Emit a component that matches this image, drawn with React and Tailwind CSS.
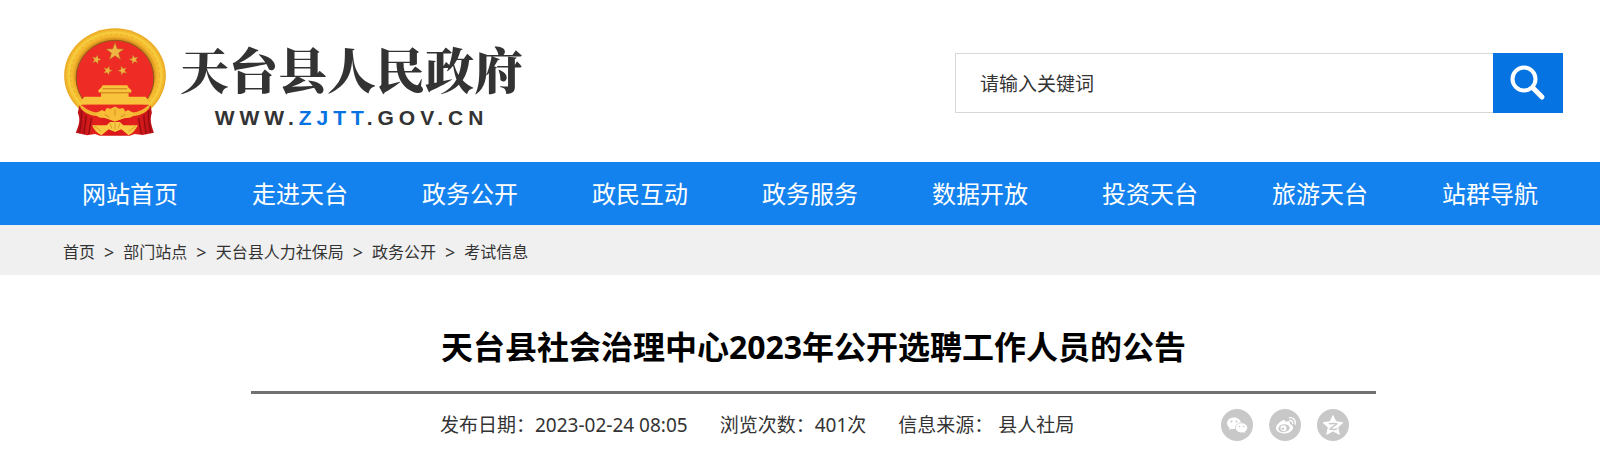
const NAV = ["网站首页", "走进天台", "政务公开", "政民互动", "政务服务", "数据开放", "投资天台", "旅游天台", "站群导航"];
const CRUMBS = ["首页", "部门站点", "天台县人力社保局", "政务公开", "考试信息"];

function Emblem() {
  return (
    <svg viewBox="42 25 306 325" className="h-[108px] w-[102px] shrink-0" role="img" aria-label="国徽">
      <defs>
        <radialGradient id="rim" cx="0.5" cy="0.5" r="0.5">
          <stop offset="0.75" stopColor="#c8861a" />
          <stop offset="0.82" stopColor="#f3b22a" />
          <stop offset="0.91" stopColor="#f8ce3e" />
          <stop offset="1" stopColor="#eaa41f" />
        </radialGradient>
        <linearGradient id="drape" x1="0" x2="1" y1="0" y2="0">
          <stop offset="0" stopColor="#b80f16" />
          <stop offset="0.25" stopColor="#e3201e" />
          <stop offset="0.5" stopColor="#d8181a" />
          <stop offset="0.75" stopColor="#e3201e" />
          <stop offset="1" stopColor="#b80f16" />
        </linearGradient>
        <path id="star" d="M0-10 2.4-3.2 9.5-3.1 3.8 1.2 5.9 8.1 0 4-5.9 8.1-3.8 1.2-9.5-3.1-2.4-3.2Z" />
      </defs>
      <ellipse cx="195" cy="168" rx="153" ry="142" fill="url(#rim)" />
      <ellipse cx="195" cy="168" rx="134" ry="124" fill="none" stroke="#e4a025" strokeWidth="2" strokeDasharray="7 9" />
      <ellipse cx="195" cy="176" rx="117" ry="114" fill="#ee2b24" stroke="#8f5a1c" strokeWidth="3" />
      <g fill="#efb643" stroke="#b9541c" strokeWidth="0.6">
        <use href="#star" transform="translate(195 97) scale(2.9)" />
        <use href="#star" transform="translate(139 120) rotate(15) scale(1.5)" />
        <use href="#star" transform="translate(252 120) rotate(-15) scale(1.5)" />
        <use href="#star" transform="translate(173 153) rotate(20) scale(1.5)" />
        <use href="#star" transform="translate(218 153) rotate(-20) scale(1.5)" />
      </g>
      <path d="M158 197h74l4 8 9 8-2 7h-7v12h51l8 10v14H95v-14l8-10h50v-12h-6l-3-7 9-8Z" fill="#f9c43b" />
      <path d="M148 220h94M158 208h74" stroke="#c67a1d" strokeWidth="3" fill="none" />
      <path d="M92 256h206l-14 16q-12 8-26 10l-18-8-20-8-25-4-25 4-20 8-18 8q-14-2-26-10Z" fill="#ea2822" />
      <path d="M88 258c18 22 46 32 70 34l37 14 37-14c24-2 52-12 70-34l4 22c-8 24 0 40 6 60l-34 7-24-3-14 5H149l-14-5-24 4-34-8c8-20 16-38 6-60Z" fill="url(#drape)" />
      <path d="M94 274c2 24-2 44-6 66M108 288c0 20-6 40-6 55M296 274c-2 24 2 44 6 66M282 288c0 20 6 40 6 55M124 296l-8 48M266 296l8 48" stroke="#940c13" strokeWidth="4" fill="none" />
      <path d="M96 258q18 18 46 22l-6 10q-30-4-46-26ZM294 258q-18 18-46 22l6 10q30-4 46-26Z" fill="#f3b22f" />
      <path d="M136 286c10 12 24 8 36 12l23 8 23-8c12-4 26 0 36-12l-8-8-12-6-8 4-6-10-12 2-13-7-13 7-12-2-6 10-8-4-12 6Z" fill="#f7bd37" />
      <path d="M164 285l14 8M226 285l-14 8M195 270v18" stroke="#d88d21" strokeWidth="3" />
      <path d="M170 318l10-10h30l10 10 44 0c-8 16-18 26-28 30l-22-18-19 8-19-8-22 18c-12-6-22-16-28-30Z" fill="#f9ca43" />
      <path d="M180 312l6 16M195 309v22M210 312l-6 16M132 320l22 16M258 320l-22 16" stroke="#cf8620" strokeWidth="2" />
    </svg>
  );
}

function WechatIcon() {
  return (
    <svg viewBox="0 0 32 32" className="size-8" aria-hidden="true">
      <path fill="#fff" d="M13 8.500c-4 0-7 2.500-7 5.800 0 1.900 1 3.500 2.600 4.500l-.6 2.200 2.500-1.300c.8.2 1.600.3 2.500.3 4 0 7-2.500 7-5.700s-3-5.800-7-5.800Z" />
      <path fill="#fff" stroke="#c8c8c8" strokeWidth=".7" d="M20.500 13.800c-3.300 0-6 2.200-6 5s2.700 5 6 5c.7 0 1.400-.1 2-.3l2.200 1.100-.5-1.900c1.400-.9 2.300-2.300 2.300-3.900 0-2.800-2.700-5-6-5Z" />
      <g fill="#c8c8c8"><circle cx="10.500" cy="12.500" r="1" /><circle cx="15.500" cy="12.500" r="1" /><circle cx="18.500" cy="17.500" r=".8" /><circle cx="22.500" cy="17.500" r=".8" /></g>
    </svg>
  );
}

function WeiboIcon() {
  return (
    <svg viewBox="0 0 32 32" className="size-8" aria-hidden="true">
      <path fill="#fff" d="M13.500 11.500c1.500-.8 3-.5 2.700 1.500 2.500-1 5-1 4.800 1.200-.1.700-.2 1 .8 1.400 1.500.6 2.200 1.500 2.200 2.900 0 3.200-4 6-8.500 6S7 22.200 7 19c0-2.700 3.500-6.300 6.500-7.500Z" />
      <ellipse cx="15" cy="19.200" rx="5.700" ry="3.900" fill="#c8c8c8" transform="rotate(-8 15 19.200)" />
      <circle cx="14.500" cy="19.300" r="3" fill="#fff" />
      <circle cx="13.800" cy="19.800" r="1.200" fill="#c8c8c8" />
      <path fill="none" stroke="#fff" strokeWidth="1.400" strokeLinecap="round" d="M20.500 8.700c3.700-.5 6.500 2.500 5.800 6.300M20.700 11.500c1.900-.3 3.300 1.200 2.900 3" />
    </svg>
  );
}

function QzoneIcon() {
  return (
    <svg viewBox="0 0 32 32" className="size-8" aria-hidden="true">
      <path fill="#fff" stroke="#fff" strokeWidth="1" strokeLinejoin="round" d="M16 6.500l2.900 6.300 7.100.8-5.300 4.700 1.600 7L16 21.900l-6.300 3.400 1.600-7L6 13.600l7.100-.8Z" />
      <path fill="none" stroke="#c8c8c8" strokeWidth="1.500" strokeLinejoin="round" d="M11.800 14.800c2.800-.5 5.500-.5 8 0l-7 5.200c2.600.5 5 .5 7.400.1" />
    </svg>
  );
}

const SHARE = [
  ["分享到微信", WechatIcon],
  ["分享到微博", WeiboIcon],
  ["分享到QQ空间", QzoneIcon],
];

export default function App() {
  return (
    <div className="bg-white font-['Noto_Sans','Noto_Sans_CJK_SC',sans-serif] text-[#333]">
      <header className="flex items-start justify-between pt-7 pr-[37px] pb-[26px] pl-16">
        <a href="#" className="flex items-start gap-[14px]">
          <Emblem />
          <span className="flex flex-col items-center pt-[14px]">
            <span className="font-['Noto_Serif_CJK_SC','Noto_Sans_CJK_SC',serif] text-[49px] leading-[52px] font-black whitespace-nowrap">天台县人民政府</span>
            <span className="pt-3 font-['Liberation_Sans',sans-serif] text-[21px] leading-6 font-bold tracking-[5px]">
              WWW.<span className="text-[#0573e1]">ZJTT</span>.GOV.CN
            </span>
          </span>
        </a>
        <form className="mt-[25px] flex h-[60px] w-[608px]" onSubmit={(e) => e.preventDefault()}>
          <input
            type="text"
            aria-label="搜索关键词"
            placeholder="请输入关键词"
            className="min-w-0 flex-1 border border-r-0 border-[#d8d8d8] px-6 pt-[2px] text-[19px] outline-none placeholder:text-[#333] placeholder:opacity-100"
          />
          <button type="submit" aria-label="搜索" className="flex w-[70px] items-center justify-center bg-[#0573e1]">
            <svg viewBox="0 0 36 36" className="size-9" fill="none" stroke="#fff" aria-hidden="true">
              <circle cx="14" cy="14" r="11.500" strokeWidth="4" />
              <path d="M23 23l9 9" strokeWidth="5" strokeLinecap="round" />
            </svg>
          </button>
        </form>
      </header>

      <nav className="flex h-[63px] bg-[#1382ee] pr-[25px] pl-[45px]">
        {NAV.map((item) => (
          <a key={item} href="#" className="flex flex-1 items-center justify-center text-2xl whitespace-nowrap text-white">{item}</a>
        ))}
      </nav>

      <nav aria-label="面包屑" className="flex h-[50px] items-center gap-[9px] bg-[#f0f0f0] px-[63px] pt-1 text-base">
        {CRUMBS.map((item, i) => (
          <span key={item} className="flex items-center gap-[9px]">
            {i > 0 && <span className="text-lg leading-6">&gt;</span>}
            <a href="#">{item}</a>
          </span>
        ))}
      </nav>

      <main className="mr-56 ml-[251px] pt-12">
        <h1 className="border-b-[3px] border-[#717171] pb-5 text-center text-[32px] leading-[48px] font-bold text-black">
          天台县社会治理中心2023年公开选聘工作人员的公告
        </h1>
        <div className="flex items-center justify-between pt-[15px] pr-[27px] pb-5 pl-[189px]">
          <div className="flex gap-8 text-[19px] leading-8 whitespace-nowrap">
            <span>发布日期：2023-02-24 08:05</span>
            <span>浏览次数：401次</span>
            <span>信息来源： 县人社局</span>
          </div>
          <div className="flex gap-4">
            {SHARE.map(([label, Icon]) => (
              <button key={label} type="button" aria-label={label} className="size-8 rounded-full bg-[#c8c8c8]">
                <Icon />
              </button>
            ))}
          </div>
        </div>
      </main>
    </div>
  );
}
